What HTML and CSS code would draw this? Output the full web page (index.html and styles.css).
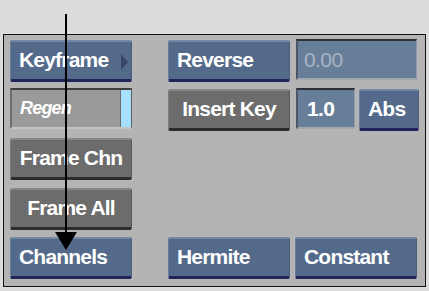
FILE: index.html
```html
<!DOCTYPE html>
<html>
<head>
<meta charset="utf-8">
<link rel="stylesheet" href="styles.css">
</head>
<body>
<div class="stage">
  <div class="panel">
    <div class="btn blue r1 c1 left">Keyframe<span class="tri"></span></div>
    <div class="btn blue r1 c2 left">Reverse</div>
    <div class="field bluef r1 c3 up">0.00</div>

    <div class="field grayf r2 c1"><span class="regen">Regen</span><span class="cyan"></span></div>
    <div class="btn gray r2 c2 down">Insert Key</div>
    <div class="r2 c3 pair">
      <div class="field bluef one">1.0</div>
      <div class="btn blue abs down left">Abs</div>
    </div>

    <div class="btn gray r3 c1">Frame Chn</div>
    <div class="btn gray r4 c1">Frame All</div>

    <div class="btn blue r5 c1 left">Channels</div>
    <div class="btn blue r5 c2 left">Hermite</div>
    <div class="btn blue r5 c3 left shiftl">Constant</div>
  </div>
  <div class="arrow"><div class="shaft"></div><div class="head"></div></div>
</div>
</body>
</html>
```
FILE: styles.css
```css
html, body { margin: 0; padding: 0; }
body {
  background: #dcdcdc;
  width: 429px;
  height: 291px;
  overflow: hidden;
  font-family: "Liberation Sans", Arial, sans-serif;
}
.stage { position: relative; width: 429px; height: 291px; }
.panel {
  position: absolute;
  left: 3px;
  top: 34px;
  border: 1px solid #111;
  background: #b4b4b4;
  display: grid;
  grid-template-columns: 122px 122px 122px;
  column-gap: 36px;
  grid-template-rows: 48px 50px 50px 49px 42px;
  justify-items: start;
  padding: 5px 0 0 6px;
  box-sizing: border-box;
  width: 423px;
  height: 253px;
}
.r1 { grid-row: 1; } .r2 { grid-row: 2; } .r3 { grid-row: 3; } .r4 { grid-row: 4; } .r5 { grid-row: 5; }
.c1 { grid-column: 1; } .c2 { grid-column: 2; } .c3 { grid-column: 3; margin-left: -30px; }

.btn {
  width: 122px;
  height: 42px;
  box-sizing: border-box;
  color: #fff;
  font-weight: bold;
  font-size: 21px;
  letter-spacing: -0.8px;
  display: flex;
  align-items: center;
  justify-content: center;
  padding-bottom: 1px;
  border-radius: 2px;
  position: relative;
  align-self: start;
}
.btn.left { justify-content: flex-start; padding-left: 8px; }
.blue {
  background: #546a8b;
  border-top: 2px solid #7488a6;
  border-left: 1px solid #6a7e9c;
  border-right: 1px solid #4a5d7c;
  border-bottom: 3px solid #20245a;
}
.gray {
  background: #6c6c6c;
  border-top: 2px solid #878787;
  border-left: 1px solid #7c7c7c;
  border-right: 1px solid #5a5a5a;
  border-bottom: 3px solid #2c2c2c;
}
.tri {
  position: absolute;
  right: 3px;
  top: 12px;
  width: 0; height: 0;
  border-top: 8px solid transparent;
  border-bottom: 8px solid transparent;
  border-left: 7px solid #3a4468;
}
.down { margin-top: 1px; }
.up { margin-top: -1px; }
.c3.shiftl { margin-left: -31px; }

.field {
  height: 41px;
  box-sizing: border-box;
  font-size: 21px;
  letter-spacing: -0.6px;
  display: flex;
  align-items: center;
  align-self: start;
}
.bluef {
  background: #677e99;
  border-top: 2px solid #2e3038;
  border-left: 2px solid #4a5566;
  border-right: 1px solid #8e9aab;
  border-bottom: 2px solid #a2a6ad;
  color: #a9b4c3;
  padding-left: 6px;
  width: 121px;
}
.bluef.one { width: 59px; color: #fff; font-weight: bold; padding-left: 9px; }
.pair { display: flex; gap: 4px; align-items: flex-start; }
.btn.abs { width: 60px; }
.grayf {
  background: #9a9a9a;
  border-top: 2px solid #3e3e3e;
  border-left: 2px solid #6f6f6f;
  border-bottom: 2px solid #c4c4c4;
  border-right: 1px solid #5e5e5e;
  width: 122px;
  justify-content: space-between;
  align-items: stretch;
}
.regen {
  color: #fff;
  font-style: italic;
  font-weight: bold;
  font-size: 18px;
  letter-spacing: -0.8px;
  display: flex;
  align-items: center;
  padding-left: 8px;
}
.cyan {
  width: 10px;
  background: #a6e0ff;
  border-left: 1px solid #6b6b6b;
}

.arrow {
  position: absolute;
  left: 55px;
  top: 14px;
  width: 22px;
  height: 236px;
  display: flex;
  flex-direction: column;
  align-items: center;
}
.shaft { width: 2px; height: 218px; background: #000; }
.head {
  width: 0; height: 0;
  border-left: 11px solid transparent;
  border-right: 11px solid transparent;
  border-top: 18px solid #000;
}
```
